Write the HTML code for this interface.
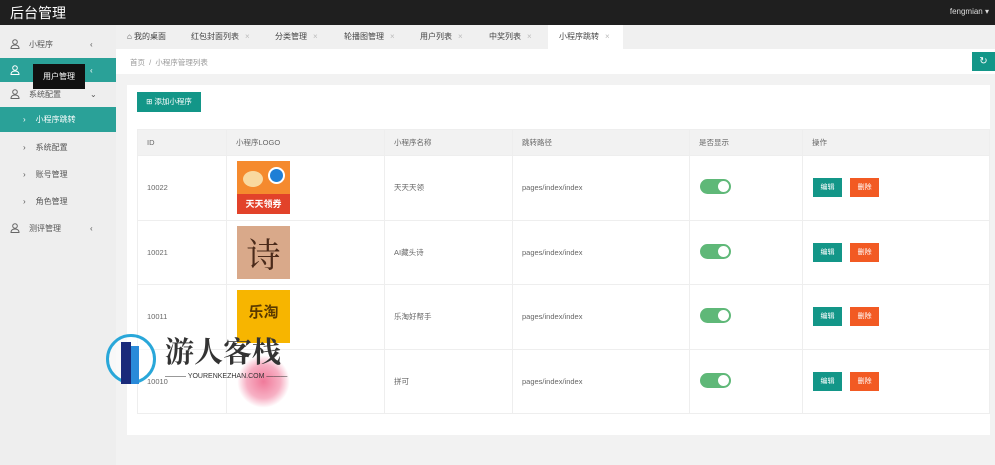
<!DOCTYPE html>
<html><head><meta charset="utf-8"><style>
*{margin:0;padding:0;box-sizing:border-box}
body{width:995px;height:465px;overflow:hidden;background:#f2f2f2;font-family:"Liberation Sans","Noto Sans CJK SC",sans-serif;font-size:8px;color:#666;position:relative}
.abs{position:absolute}
.hd{left:0;top:0;width:995px;height:25px;background:#1f1f1f}
.side{left:0;top:25px;width:116px;height:440px;background:#eeeeee}
.si{position:absolute;left:0;width:116px;height:25px;line-height:25px;font-size:8px;color:#555}
.si svg{position:absolute;left:10px;top:7px}
.teal{background:#2aa198;color:#fff}
.tabs{left:116px;top:25px;width:879px;height:24px;background:#f0f0f0}
.tab{position:absolute;top:0;height:24px;line-height:24px;font-size:8px;color:#444}
.cls{color:#bbb;margin-left:6px}
.bc{left:116px;top:49px;width:879px;height:25px;background:#fff}
.card{left:127px;top:85px;width:863px;height:350px;background:#fff}
table{position:absolute;left:137px;top:129px;width:853px;border-collapse:collapse}
td{border:1px solid #eee;padding-left:9px;font-size:7.5px;color:#666}
thead td{background:#f2f2f2;height:26px}
tbody td{height:64.5px}
.sw{display:inline-block;width:31px;height:15px;border-radius:8px;background:#5fb878;position:relative;margin-left:1px}
.sw::after{content:"";position:absolute;right:2px;top:2px;width:11px;height:11px;border-radius:50%;background:#fff}
.b{display:inline-block;width:29px;height:19px;line-height:19px;text-align:center;color:#fff;font-size:7px;margin-left:1px}
.logo{width:53px;height:53px;margin-left:1px}
</style></head><body>
<div class="abs hd"><span class="abs" style="left:10px;top:3px;font-size:14px;color:#fff">后台管理</span><span class="abs" style="right:6px;top:7px;font-size:8px;color:#ddd">fengmian ▾</span></div>
<div class="abs side">
<div class="si" style="top:7px"><svg width="10" height="10" viewBox="0 0 10 10" fill="none" stroke="#666"><circle cx="5" cy="3" r="2.3"/><path d="M1 9.5c0-2.5 2-3.5 4-3.5s4 1 4 3.5z"/></svg><span style="margin-left:29px">小程序</span><span class="abs" style="left:90px">‹</span></div>
<div class="si teal" style="top:33px;height:24px"><svg width="10" height="10" viewBox="0 0 10 10" fill="none" stroke="#fff"><circle cx="5" cy="3" r="2.3"/><path d="M1 9.5c0-2.5 2-3.5 4-3.5s4 1 4 3.5z"/></svg><span class="abs" style="left:90px">‹</span></div>
<div class="si" style="top:57px"><svg width="10" height="10" viewBox="0 0 10 10" fill="none" stroke="#666"><circle cx="5" cy="3" r="2.3"/><path d="M1 9.5c0-2.5 2-3.5 4-3.5s4 1 4 3.5z"/></svg><span style="margin-left:29px">系统配置</span><span class="abs" style="left:90px">⌄</span></div>
<div class="si teal" style="top:82px"><span style="margin-left:23px">›</span><span style="margin-left:10px">小程序跳转</span></div>
<div class="si" style="top:110px"><span style="margin-left:23px">›</span><span style="margin-left:10px">系统配置</span></div>
<div class="si" style="top:137px"><span style="margin-left:23px">›</span><span style="margin-left:10px">账号管理</span></div>
<div class="si" style="top:164px"><span style="margin-left:23px">›</span><span style="margin-left:10px">角色管理</span></div>
<div class="si" style="top:191px"><svg width="10" height="10" viewBox="0 0 10 10" fill="none" stroke="#666"><circle cx="5" cy="3" r="2.3"/><path d="M1 9.5c0-2.5 2-3.5 4-3.5s4 1 4 3.5z"/></svg><span style="margin-left:29px">测评管理</span><span class="abs" style="left:90px">‹</span></div>
</div>
<div class="abs" style="left:33px;top:64px;width:52px;height:25px;background:#111;color:#fff;font-size:8px;line-height:25px;text-align:center">用户管理</div>
<div class="abs tabs">
<div class="tab" style="left:11px">⌂ 我的桌面</div>
<div class="tab" style="left:75px">红包封面列表<span class="cls">×</span></div>
<div class="tab" style="left:159px">分类管理<span class="cls">×</span></div>
<div class="tab" style="left:228px">轮播图管理<span class="cls">×</span></div>
<div class="tab" style="left:304px">用户列表<span class="cls">×</span></div>
<div class="tab" style="left:373px">中奖列表<span class="cls">×</span></div>
<div class="tab" style="left:432px;width:75px;background:#fff;padding-left:11px">小程序跳转<span class="cls">×</span></div>
</div>
<div class="abs bc"><span class="abs" style="left:14px;top:8px;color:#999;font-size:7.5px">首页 &nbsp;/&nbsp; 小程序管理列表</span></div>
<div class="abs" style="left:972px;top:52px;width:23px;height:19px;background:#139688;color:#fff;text-align:center;line-height:19px;font-size:10px">↻</div>
<div class="abs card"></div>
<div class="abs" style="left:137px;top:92px;width:64px;height:20px;background:#139688;color:#fff;font-size:7.5px;line-height:20px;text-align:center">⊞ 添加小程序</div>
<table>
<colgroup><col style="width:89px"><col style="width:158px"><col style="width:128px"><col style="width:177px"><col style="width:113px"><col></colgroup>
<thead><tr><td>ID</td><td>小程序LOGO</td><td>小程序名称</td><td>跳转路径</td><td>是否显示</td><td>操作</td></tr></thead>
<tbody>
<tr><td>10022</td><td><div class="logo" style="background:linear-gradient(#f58a2e 62%,#e2422a 62%);position:relative;color:#fff;font-size:9px;font-weight:bold;text-align:center"><div style="position:absolute;right:5px;top:6px;width:17px;height:17px;border-radius:50%;background:#1e7fd6;border:2px solid #fff"></div><div style="position:absolute;left:6px;top:10px;width:20px;height:16px;border-radius:50%;background:#f9d9a0"></div><div style="position:absolute;left:0;right:0;bottom:4px">天天领券</div></div></td><td>天天天领</td><td>pages/index/index</td><td><span class="sw"></span></td><td><span class="b" style="background:#139688">编辑</span> <span class="b" style="background:#f25a23;margin-left:6px">删除</span></td></tr>
<tr><td>10021</td><td><div class="logo" style="background:#d9a98a;color:#4a2a1a;font-size:34px;text-align:center;line-height:53px;font-family:'Noto Serif CJK SC',serif">诗</div></td><td>AI藏头诗</td><td>pages/index/index</td><td><span class="sw"></span></td><td><span class="b" style="background:#139688">编辑</span> <span class="b" style="background:#f25a23;margin-left:6px">删除</span></td></tr>
<tr><td>10011</td><td><div class="logo" style="background:#f7b500;color:#5a3a00;font-size:15px;text-align:center;line-height:45px;font-weight:bold">乐淘</div></td><td>乐淘好帮手</td><td>pages/index/index</td><td><span class="sw"></span></td><td><span class="b" style="background:#139688">编辑</span> <span class="b" style="background:#f25a23;margin-left:6px">删除</span></td></tr>
<tr><td>10010</td><td><div class="logo" style="background:radial-gradient(circle,#f07a9a 0,#f7b0c4 45%,#fff 70%)"></div></td><td>拼可</td><td>pages/index/index</td><td><span class="sw"></span></td><td><span class="b" style="background:#139688">编辑</span> <span class="b" style="background:#f25a23;margin-left:6px">删除</span></td></tr>
</tbody></table>
<div class="abs" style="left:106px;top:334px;width:50px;height:50px;border:3px solid #29a7d9;border-radius:50%;background:rgba(255,255,255,.6)"></div>
<div class="abs" style="left:121px;top:342px;width:10px;height:42px;background:#1a2a7a"></div>
<div class="abs" style="left:131px;top:346px;width:8px;height:38px;background:#2a8ad9"></div>
<div class="abs" style="left:165px;top:333px;font-size:29px;font-weight:bold;color:#333;font-family:'Noto Serif CJK SC',serif;line-height:36px">游人客栈</div>
<div class="abs" style="left:165px;top:373px;font-size:7px;color:#333;white-space:nowrap">——— YOURENKEZHAN.COM ———</div>
</body></html>
